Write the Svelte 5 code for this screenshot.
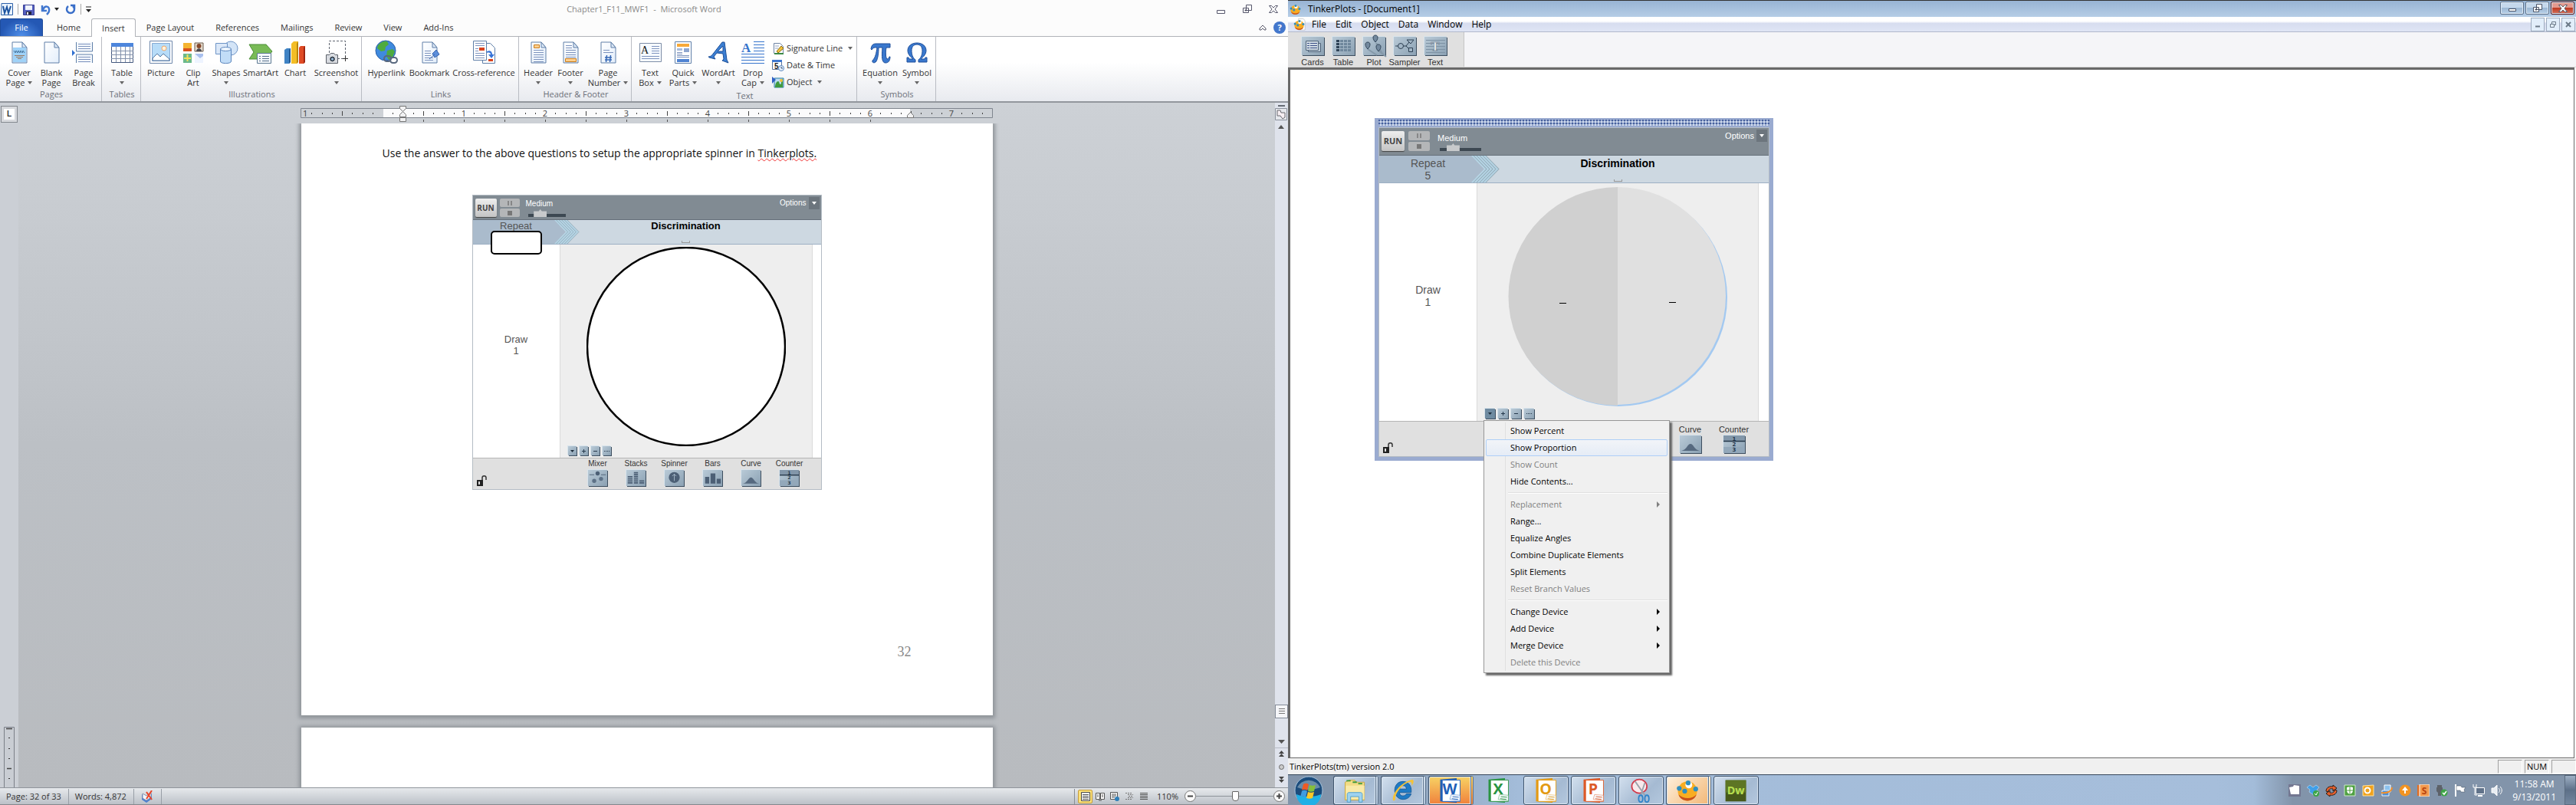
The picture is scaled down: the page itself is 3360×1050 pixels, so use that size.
<script>
  const tabs = ['Home', 'Insert', 'Page Layout', 'References', 'Mailings', 'Review', 'View', 'Add-Ins'];

  const sheet = (lines) =>
    `<path d="M7 3h13l6 7v20H7z" fill="url(#paper)" stroke="#5f7fa8"/><path d="M20 3v7h6z" fill="#dce8f6" stroke="#5f7fa8"/>${lines}`;
  const rows = (x1, x2, ys, c = '#7d93bd') =>
    ys.map((y) => `<path d="M${x1} ${y}.5H${x2}" stroke="${c}"/>`).join('');

  const art = {
    cover: sheet(
      '<path d="M8 10h17v19H8z" fill="#9fd2f8"/><path d="M9 14l2 3 1-3 2 3 1-3 2 3 1-3 2 3 1-3 2 3" fill="none" stroke="#45739c"/><path d="M10 20.500h13M12 22.500h9M14 24.500h5" stroke="#9c7b62"/>'
    ),
    blank: sheet(''),
    pbreak:
      '<path d="M6.500 3v12h21V3" fill="#f4f8fd" stroke="#5f7fa8"/><path d="M6.500 30V19h21v11" fill="#f4f8fd" stroke="#5f7fa8"/>' +
      rows(9, 25, [5, 8, 11, 22, 25, 28]) +
      '<path d="M1 13l4 4-4 4z" fill="#2f6fd0"/>',
    table:
      '<path d="M2.500 4.500h28v25h-28z" fill="#fff" stroke="#44597f"/><path d="M2 4h29v5H2z" fill="#4d86dc"/><path d="M2 14.500h29M2 19.500h29M2 24.500h29M8.500 9v20M14.500 9v20M20.500 9v20M26.500 9v20" stroke="#8291ab"/>',
    picture:
      '<path d="M1.500 1.500h29v29h-29z" fill="#fff" stroke="#6d87ab"/><path d="M4.500 4.500h23v23h-23z" fill="#b7dcf8" stroke="#86a9d2"/><circle cx="20" cy="11" r="3" fill="#fff2dc" stroke="#f0a868"/><path d="M5 24l6-6 4 4 4-4 8 7v2H5z" fill="#fff" stroke="#53779f"/>',
    clip:
      '<path d="M3 4h11v11H3z" fill="#f5b431"/><path d="M3 11h11v4H3z" fill="#d9531e"/><path d="M18 4h11v11H18z" fill="#e6ddd0" stroke="#6b5a4a"/><circle cx="23.500" cy="8" r="3" fill="#86492c"/><path d="M20 15c0-5 7-5 7 0z" fill="#4b4a52"/><path d="M3 18h11v12H3z" fill="#6bb98c"/><path d="M8.500 19v9M4 24h9" stroke="#f3e35c" stroke-width="2"/><path d="M18 18h11v12H18z" fill="#a9c0ee"/><path d="M18 18l7 6 4-3v9H18z" fill="#eef4ff"/>',
    shapes:
      '<circle cx="22" cy="11" r="9" fill="#d3e4f7" stroke="#6e94c6"/><path d="M2.500 4.500h15v14h-15z" fill="#dbe8f8" stroke="#6e94c6"/><path d="M8.500 12v16c0 3.500 14 3.500 14 0V12z" fill="#c1dcf7" stroke="#5c86bd"/><ellipse cx="15.500" cy="12" rx="7" ry="2.500" fill="#eef6ff" stroke="#5c86bd"/>',
    smartart:
      '<path d="M1 6h22l8 9-8 10H1l6-9z" fill="#79bb57" stroke="#4c8f38"/><path d="M11.500 17.500h18v13h-18z" fill="#f4f8fb" stroke="#5b7891"/><path d="M14 21.500h2M18 21.500h9M14 24.500h2M18 24.500h9M14 27.500h2M18 27.500h9" stroke="#58718c"/>',
    chart:
      '<path d="M2 13l3-2h5v18l-2 2H2z" fill="#3f83c4"/><path d="M8 13l2-2v18l-2 2z" fill="#26598f"/><path d="M11 5l3-3h6v27l-2 2h-7z" fill="#f3bd25"/><path d="M18 5l2-3v27l-2 2z" fill="#b98407"/><path d="M21 10l2-2h6v21l-2 2h-6z" fill="#df4a24"/><path d="M27 10l2-2v21l-2 2z" fill="#9d2410"/>',
    shot:
      '<path d="M6.500 17V1.500h21v20M17 24.500h8" fill="none" stroke="#5e6470" stroke-dasharray="3 2"/><path d="M24 24.500h7M27.500 21v7" stroke="#333"/><path d="M2.500 19.500h4l2-2h4l2 2h3v11h-15z" fill="#d6d9df" stroke="#5b6068"/><circle cx="10.500" cy="25" r="4" fill="#3c4754" stroke="#fff"/><circle cx="10.500" cy="25" r="1.500" fill="#9fc3e4"/>',
    link:
      '<circle cx="15" cy="14" r="13" fill="#3f8ade" stroke="#2b5fa8"/><path d="M5 7c4-5 9-6 12-5l2 4-4 3-1 5-5 1-5-4zM17 14l7-2 3 3-3 8-5 3-3-5z" fill="#4eab3f"/><path d="M13 24.500a3.500 3.500 0 0 1 3.500-3.500h2a3.500 3.500 0 0 1 0 7h-2a3.500 3.500 0 0 1-3.500-3.500zM21 26.500a3.500 3.500 0 0 1 3.500-3.500h2a3.500 3.500 0 0 1 0 7h-2a3.500 3.500 0 0 1-3.500-3.500z" fill="none" stroke="#59697f" stroke-width="2"/>',
    mark: sheet(
      rows(10, 18, [14, 17, 20]) + rows(10, 21, [23, 26]) + '<path d="M20 18l5-5 4 6-6 4zM16 25l7-6" fill="#5c8edb" stroke="#3563ae"/>'
    ),
    xref:
      '<path d="M14.500 30.500v-26h10l6 6v20z" fill="#fff" stroke="#5f7fa8"/><path d="M22 25h6v3h-6z" fill="#d9421c"/><path d="M2.500 1.500h17v25h-17z" fill="#fff" stroke="#5f7fa8"/>' +
      rows(5, 17, [4, 7, 17, 20, 23]) +
      '<path d="M10 10h7v4h-7z" fill="#d9421c"/><path d="M5 11.500h4M5 14.500h4" stroke="#7d93bd"/><path d="M20 15c5-2 7 1 7 4h3l-4 5-4-5h3c0-2-2-3-5-2z" fill="#3874d8"/>',
    header: sheet('<path d="M10.500 6.500h7v4h-7z" fill="#ffcf8d" stroke="#c97d1d"/>' + rows(10, 23, [13, 16, 19, 22, 25, 28])),
    footer: sheet(rows(10, 18, [7, 10]) + rows(10, 23, [13, 16, 19, 22]) + '<path d="M9.500 24.500h14v4h-14z" fill="#ffcf8d" stroke="#c97d1d"/>'),
    pnum: sheet(rows(10, 18, [13]) + rows(10, 23, [16]) + '<path d="M14.500 20l-1 9M19.500 20l-1 9M12 23h9M12 26h9" stroke="#3567b5" stroke-width="1.500"/>'),
    tbox:
      '<path d="M2.500 4.500h28v24h-28z" fill="#f6faff" stroke="#7d8da6"/>' + rows(18, 28, [8, 11, 14, 17]) + rows(5, 28, [21, 24]) + '<text x="4" y="18" font-size="14" font-family="Liberation Serif, serif" fill="#111">A</text>',
    parts:
      '<path d="M5.500 2.500h21v28h-21z" fill="#fff" stroke="#5f7fa8"/><path d="M8 5h16v4H8z" fill="#f7a938"/><path d="M8 11h7v3H8z" fill="#a9bcdb"/><path d="M17 11h7v5h-7z" fill="#8ea6cf"/>' + rows(8, 15, [16, 18]) + rows(8, 24, [20, 22]) + '<path d="M8 25h16v4H8z" fill="#4f83d2"/>',
    wordart:
      '<path d="M3 22c3 0 5-2 7-5L21 3h3l3 23 2 4-8-3 2-2-1-7-8-1-4 5 2 3-8-2zM15 15h7V8z" fill="#3c7fd2" stroke="#1e4f97"/>',
    drop:
      '<text x="1" y="16" font-size="17" font-weight="bold" font-family="Liberation Serif, serif" fill="#3674cc">A</text>' + rows(17, 31, [2, 6, 10, 14], '#3674cc') + rows(1, 31, [18, 22, 26, 30], '#3674cc'),
    pi: '<path d="M4 12c1-6 3-7 7-7h18v5h-5c-1 6-1 13 1 15 2 0 2-1 3-3h1c0 5-2 8-6 8-5 0-5-8-4-20h-5c0 8-1 14-3 18-2 3-6 2-5-1 4-4 5-10 6-17-4 0-5 0-7 3z" fill="#3a78cd" stroke="#1f4f9a"/>',
    omega: '<path d="M3 29v-6h2l1 2h5c-4-3-7-7-7-11C4 8 9 4 16 4s12 4 12 10c0 4-3 8-7 11h5l1-2h2v6H18v-3c4-3 5-8 5-12s-2-8-7-8-7 4-7 8 1 9 5 12v3z" fill="#3a78cd" stroke="#1f4f9a"/>'
  };

  const groups = [
    { name: 'Pages', items: [['cover', 42, 'Cover', 'Page', 1], ['blank', 42, 'Blank', 'Page'], ['pbreak', 42, 'Page', 'Break']] },
    { name: 'Tables', items: [['table', 44, 'Table', '', 1]] },
    { name: 'Illustrations', items: [['picture', 44, 'Picture', ''], ['clip', 40, 'Clip', 'Art'], ['shapes', 46, 'Shapes', '', 1], ['smartart', 44, 'SmartArt', ''], ['chart', 46, 'Chart', ''], ['shot', 61, 'Screenshot', '', 1]] },
    { name: 'Links', items: [['link', 56, 'Hyperlink', ''], ['mark', 56, 'Bookmark', ''], ['xref', 86, 'Cross-reference', '']] },
    { name: 'Header & Footer', items: [['header', 42, 'Header', '', 1], ['footer', 42, 'Footer', '', 1], ['pnum', 56, 'Page', 'Number', 1]] },
    { name: 'Text', items: [['tbox', 40, 'Text', 'Box', 1], ['parts', 46, 'Quick', 'Parts', 1], ['wordart', 46, 'WordArt', '', 1], ['drop', 44, 'Drop', 'Cap', 1]], small: true },
    { name: 'Symbols', items: [['pi', 52, 'Equation', '', 1], ['omega', 44, 'Symbol', '', 1]] }
  ];

  const smallItems = [
    { label: 'Signature Line', drop: true, art: '<path d="M2.500 1.500h8l4 4v9h-12z" fill="#fff" stroke="#6d83a4"/><path d="M4 5h5M4 8h4" stroke="#8fa2c0"/><path d="M6 12l6-7 3 3-7 6z" fill="#f2c23c" stroke="#8a6a12"/><path d="M3 14h12v2H3z" fill="#3c8a46"/>' },
    { label: 'Date & Time', drop: false, art: '<path d="M.5 1.500h12v12H.5z" fill="#fff" stroke="#5b7399"/><path d="M0 1h13v3H0z" fill="#3f78cf"/><text x="3" y="13" font-size="10" font-weight="bold" font-family="Liberation Sans, sans-serif" fill="#222">5</text><circle cx="12" cy="12" r="3.500" fill="#e9f2fc" stroke="#5c87bd"/><path d="M12 10v2h2" fill="none" stroke="#33507b"/>' },
    { label: 'Object', drop: true, art: '<path d="M3 3h12v12H3z" fill="#bcdcf2" stroke="#2a7da5"/><path d="M0 1l5 4-5 5z" fill="#2f5fc4"/><path d="M4 15c0-5 2-8 4-8s1 4 3 4 0-6 3-7v11z" fill="#3f9a3d"/><circle cx="12" cy="6" r="2" fill="#f2c23c"/>' }
  ];

  const inch = 106;
  const rulerTicks = Array.from({ length: 67 }, (_, i) => i + 1)
    .map((i) => ({ n: i - 8, x: 1 + (i * inch) / 8 }))
    .filter((t) => t.x < 900);

  const allDevices = ['Mixer', 'Stacks', 'Spinner', 'Bars', 'Curve', 'Counter'];
  const deviceArt = {
    Mixer: '<path d="M2 7h7M19 7h7" stroke="#4c5f75"/><circle cx="14" cy="5" r="3" fill="#4c5f75"/><circle cx="9" cy="16" r="3" fill="#5d7187"/><circle cx="19" cy="13" r="3" fill="#5d7187"/>',
    Stacks: '<path d="M2 10h7M2 13h7M2 16h7M2 19h7M11 4h6M11 7h6M11 10h6M11 13h6M11 16h6M11 19h6M19 16h7M19 19h7" stroke="#4c5f75" stroke-width="2"/>',
    Spinner: '<circle cx="14" cy="11" r="8" fill="#4c5f75"/><path d="M14 16V6M11 9l3-3 3 3" fill="none" stroke="#a9bccb"/>',
    Bars: '<path d="M3 10h6v10H3zM11 5h7v15h-7zM20 13h6v7h-6z" fill="#4c5f75"/>',
    Curve: '<path d="M2 20c7-1 8-9 12-9s5 8 12 9z" fill="#56697f"/>',
    Counter: '<path d="M0 0h28v7H0z" fill="#8296a9"/><path d="M0 15h28v8H0z" fill="#93a8ba"/><path d="M0 7.500h28" stroke="#26384a" stroke-width="1.500"/><g font-family="DejaVu Sans, sans-serif" font-size="7" font-weight="bold" fill="#25384c" text-anchor="middle"><text x="14" y="7">1</text><text x="14" y="14">2</text><text x="14" y="21">3</text></g>'
  };

  const menu = [
    { t: 'Show Percent' }, { t: 'Show Proportion', hot: true }, { t: 'Show Count', off: true }, { t: 'Hide Contents...' }, null,
    { t: 'Replacement', off: true, sub: true }, { t: 'Range...' }, { t: 'Equalize Angles' }, { t: 'Combine Duplicate Elements' }, { t: 'Split Elements' }, { t: 'Reset Branch Values', off: true }, null,
    { t: 'Change Device', sub: true }, { t: 'Add Device', sub: true }, { t: 'Merge Device', sub: true }, { t: 'Delete this Device', off: true }
  ];

  const tools = [
    { t: 'Cards', a: '<path d="M8.500 8.500h16v11h-16z" fill="#b9c9d6" stroke="#51647a"/><path d="M5.500 5.500h16v12h-16z" fill="#cfdae3" stroke="#51647a"/><path d="M7 8.500h3M11 8.500h9M7 11.500h3M11 11.500h9M7 14.500h3M11 14.500h9" stroke="#3c4f86"/>' },
    { t: 'Table', a: '<path d="M5 4h4v3H5zM5 8h4v3H5zM5 12h4v3H5zM5 16h4v3H5z" fill="#2f4356"/><path d="M10 4h4v3h-4zM15 4h4v3h-4zM20 4h4v3h-4zM10 8h4v3h-4zM15 8h4v3h-4zM20 8h4v3h-4zM10 12h4v3h-4zM15 12h4v3h-4zM20 12h4v3h-4zM10 16h4v3h-4zM15 16h4v3h-4zM20 16h4v3h-4z" fill="#6f879c"/>' },
    { t: 'Plot', a: '<path d="M17 8l8 14M6 16l12 8M20 18l10 8" stroke="#8498a8" stroke-width="2"/><g fill="#73899e" stroke="#32465a"><path d="M6 16c-4-4-4-9 0-9s4 5 0 9zM16 7c-4-4-4-9 0-9s4 5 0 9zM20 19c-4-4-4-9 0-9s4 5 0 9z"/></g>' },
    { t: 'Sampler', a: '<path d="M2 12h4M12 12h4l4-5M16 12l4 4" stroke="#2d4053" fill="none"/><circle cx="9" cy="12" r="3.500" fill="#a3b6c6" stroke="#2d4053"/><path d="M17 4h9l-4 5z" fill="#a3b6c6" stroke="#2d4053"/><path d="M19.500 14.500h5v5h-5z" fill="#a3b6c6" stroke="#2d4053"/>' },
    { t: 'Text', a: '<path d="M2 4.500h25M2 8.500h25M2 12.500h25M2 16.500h25M2 20.500h25" stroke="#7d92a4"/><text x="14" y="18" text-anchor="middle" font-family="Liberation Serif, serif" font-weight="bold" font-size="17" fill="#eef2f5" stroke="#5a6e80" stroke-width="0.500">T</text>' }
  ];

  const office = (c, l) =>
    `<path d="M2 3l24-2v36L2 35z" fill="${c}"/><path d="M5 4h26v31H5z" fill="#fff" stroke="${c}"/><text x="16" y="25" text-anchor="middle" font-size="22" font-weight="bold" font-family="Open Sans, sans-serif" fill="${c}">${l}</text><path d="M18 25l13 1v8l-15-2z" fill="#f6f9fd" stroke="${c}" stroke-width="0.500"/><path d="M20 28l9 1M19 31l9 1" stroke="${c}"/>`;
  const ball =
    '<circle cx="16" cy="20" r="14" fill="#f8ad22"/><path d="M3 25C6 37 26 37 29 25C24 32 9 32 3 25z" fill="#c9501c"/><circle cx="18" cy="11" r="5" fill="#fff"/><g fill="#2f8fbf"><circle cx="4" cy="16" r="3.500"/><circle cx="12" cy="20" r="3.500"/><circle cx="17" cy="8" r="3.500"/><circle cx="28" cy="17" r="3.500"/></g>';
  const apps = [
    { n: 'Explorer', k: 'win stack', a: '<path d="M2 7l6-3h8l2 3h12v26H2z" fill="#f2dc86" stroke="#c8a53b"/><path d="M4 5h6M13 7h6M21 9h6" stroke="#3f9a3d" stroke-width="2"/><path d="M3 12h27v20H3z" fill="#f9eaa9"/><path d="M5 36V25c0-2 1-3 3-3h16c2 0 3 1 3 3v11h-5v-8H10v8z" fill="#9ed2ef" stroke="#4a9ccb"/>' },
    { n: 'Internet Explorer', k: 'win stack', a: '<path d="M17 6c-8 0-12 6-12 13s5 13 12 13c6 0 10-3 12-8h-7c-1 2-3 3-5 3-3 0-5-2-5-5h17C30 12 25 6 17 6zm-5 11c1-4 3-5 5-5s5 1 5 5z" fill="#1f7ac4" stroke="#155a98"/><path d="M3 34C-1 26 14 6 31 3c3 2 1 6-1 9 0-4-1-6-4-5C15 10 4 25 6 33z" fill="#f3c23b"/>' },
    { n: 'Word', k: 'win stack alert', a: office('#1f5fb8', 'W') },
    { n: 'Excel', k: '', a: office('#2a9442', 'X') },
    { n: 'Outlook', k: 'win', a: office('#e39a13', 'O') },
    { n: 'PowerPoint', k: 'win', a: office('#dc5a28', 'P') },
    { n: 'Snipping Tool', k: 'win', a: '<ellipse cx="14" cy="13" rx="11" ry="10" fill="#f8e9ec" stroke="#d23b4c" stroke-width="2"/><path d="M8 6l14 20M22 8l-6 18" stroke="#9aa2ab" stroke-width="2"/><ellipse cx="25" cy="31" rx="3" ry="5" fill="none" stroke="#2f83c9" stroke-width="2"/><ellipse cx="16" cy="31" rx="3" ry="5" fill="none" stroke="#2f83c9" stroke-width="2"/>' },
    { n: 'TinkerPlots', k: 'win stack warm', a: ball },
    { n: 'Dreamweaver', k: 'win', a: '<path d="M1 4h30v31H1z" fill="#47591a"/><path d="M1 4h30v18H1z" fill="#66822a" opacity=".7"/><text x="16" y="25" text-anchor="middle" font-size="16" font-weight="bold" font-family="Open Sans, sans-serif" fill="#b8e051">Dw</text>' }
  ];

  const tray = [
    ['Camera', '<path d="M0 0h16v16H0z" fill="#737791"/><path d="M1 4l5-1 1-2 7 1v11H3z" fill="#fff"/>'],
    ['Dropbox', '<path d="M4 1l4 3 4-3 4 3-3 3 2 3-6 4-6-4 1-3-4-3z" fill="#3f9fe8" stroke="#dcefff" stroke-width="0.500"/><circle cx="12" cy="12" r="4" fill="#3da547"/><path d="M10 12l2 2 2-4" fill="none" stroke="#fff"/>'],
    ['Sync', '<path d="M1 9c0-5 5-7 9-6V1l5 4-5 4V6C6 5 4 7 4 10zM15 8c0 5-5 7-9 6v2l-5-4 5-4v3c4 1 6-1 6-4z" fill="#e8602c" stroke="#2d1e18"/>'],
    ['Shield', '<path d="M1 1h14v14H1z" fill="#4fa043" stroke="#cfe9c8"/><path d="M8 3l4 1v4c0 3-2 4-4 5-2-1-4-2-4-5V4z" fill="#fff"/><path d="M8 3v10M4 8h8" stroke="#4fa043"/>'],
    ['Outlook', '<path d="M1 2l14-1v14H1z" fill="#f0a21b" stroke="#ffe2a0"/><circle cx="7" cy="8" r="3.500" fill="none" stroke="#fff" stroke-width="2"/>'],
    ['Updates', '<path d="M5 1h8v9H5z" fill="#8dc3ef" stroke="#fff"/><path d="M2 8h9v7H2z" fill="#4d8fd6" stroke="#e5f2ff"/><path d="M1 11c8 1 14-2 14-7" fill="none" stroke="#f08f2a" stroke-width="2"/>'],
    ['Upload', '<circle cx="8" cy="8" r="7.500" fill="#f39422"/><path d="M8 3l4 5H9v4H7V8H4z" fill="#fff"/>'],
    ['Snagit', '<path d="M0 1h13v14H0z" fill="#e06e23"/><path d="M3 0h13v16H3z" fill="#f29a4e" stroke="#fff"/><text x="9" y="13" text-anchor="middle" font-size="12" font-weight="bold" font-family="Open Sans, sans-serif" fill="#b8430f">S</text>'],
    ['Safely remove', '<path d="M2 1v3h6V1M1 4h8v5l-2 2v4H3v-4L1 9z" fill="#5d6269"/><circle cx="11" cy="11" r="4.500" fill="#3da547"/><path d="M9 11l2 2 3-4" fill="none" stroke="#fff" stroke-width="1.500"/>'],
    ['Action center', '<path d="M2 0v16" stroke="#fff" stroke-width="2"/><path d="M3 2h6l1 2h5l-2 3 1 3H9L8 8H3z" fill="#fff" stroke="#3d4c5c" stroke-width="0.500"/>'],
    ['Network', '<path d="M4.500 4.500h11v8h-11z" fill="#61738a" stroke="#fff"/><path d="M7 15h6" stroke="#fff" stroke-width="2"/><path d="M1 0v4h4V0M3 4v10h3" fill="none" stroke="#fff"/>'],
    ['Volume', '<path d="M1 5h3l4-4v14l-4-4H1z" fill="#e8edf2" stroke="#fff"/><path d="M10 5c2 2 2 4 0 6M12 3c3 3 3 7 0 10" fill="none" stroke="#fff"/>']
  ];
</script>

{#snippet pic(markup, w, h, cls = '')}
  <svg class={cls} width={w} height={h} viewBox="0 0 {w} {h}" aria-hidden="true">{@html markup}</svg>
{/snippet}

{#snippet sampler(kind, devices)}
  <section class="sampler {kind}" aria-label="Sampler">
    <header class="s-head">
      <button class="run">RUN</button>
      <div class="ctl">
        <button aria-label="Pause"><svg width="6" height="6" viewBox="0 0 6 6"><path d="M1 0v6M5 0v6" stroke="#777" stroke-width="1.500" /></svg></button>
        <button aria-label="Stop"><svg width="6" height="6" viewBox="0 0 6 6"><path d="M0 0h6v6H0z" fill="#777" /></svg></button>
      </div>
      <label class="speed">Medium<input type="range" min="0" max="100" value="24" /></label>
      <button class="opts">Options<svg width="14" height="16" viewBox="0 0 14 16"><path d="M0 0h14v16H0z" fill="#6c757d" /><path d="M4 6h6l-3 4z" fill="#fff" /></svg></button>
    </header>
    <div class="s-band">
      <div class="rep">
        Repeat
        {#if kind === 'small'}<input class="blank" aria-label="Repeat count" />{:else}<span>5</span>{/if}
      </div>
      <div class="dtitle">
        <svg class="chev" viewBox="0 0 36 34" preserveAspectRatio="none" aria-hidden="true">
          <path d="M-9 0h9l17 17L0 34h-9z" fill="#aabbcc" />
          <path d="M0 0h19l17 17-17 17H0l17-17z" fill="#b5d5e6" />
          <path d="M3 0l17 17L3 34M7 0l17 17L7 34M11 0l17 17-17 17M15 0l17 17-17 17M19 0l17 17-17 17" fill="none" stroke="#93a9b5" />
        </svg>
        <strong>Discrimination</strong>
        <i></i>
      </div>
    </div>
    <div class="s-body">
      <div class="draw">Draw<br />1</div>
      <div class="stage">
        {#if kind === 'small'}
          <svg class="wheel" viewBox="0 0 260 260"><circle cx="130" cy="130" r="129" fill="#fff" stroke="#000" stroke-width="2.500" /></svg>
        {:else}
          <svg class="wheel" viewBox="0 0 286 286">
            <circle cx="144" cy="144" r="142" fill="#a3c9f1" />
            <path d="M143 0a142 142 0 0 0 0 285z" fill="#d0d0d0" />
            <path d="M143 0a141 142 0 0 1 0 284z" fill="#e0e0e0" />
            <path d="M67 151.500h9M210 150.500h9" stroke="#000" />
          </svg>
        {/if}
        <div class="mini">
          <button aria-label="Device menu" class="m1"><svg width="9" height="9" viewBox="0 0 9 9"><path d="M2 3h5l-2.500 3z" fill="#1c2b3a" /></svg></button>
          <button aria-label="Add"><svg width="9" height="9" viewBox="0 0 9 9"><path d="M2 4.500h5M4.500 2v5" stroke="#26394c" /></svg></button>
          <button aria-label="Remove"><svg width="9" height="9" viewBox="0 0 9 9"><path d="M2 4.500h5" stroke="#26394c" /></svg></button>
          <button aria-label="More"><svg width="9" height="9" viewBox="0 0 9 9"><path d="M1 4.500h7" stroke="#26394c" stroke-dasharray="1 1" /></svg></button>
        </div>
      </div>
    </div>
    <footer class="s-foot">
      <svg class="lock" width="14" height="14" viewBox="0 0 14 14" aria-label="Unlocked"><path d="M0 6h8v8H0z" fill="#222" /><path d="M2 8h2v4H2z" fill="#ddd" /><path d="M7 6V3c0-3 5-3 5 0v3" fill="none" stroke="#333" stroke-width="1.500" /></svg>
      <div class="devs">
        {#each devices as d}
          <button>{d}<svg class="dev" viewBox="0 0 28 23">{@html deviceArt[d]}</svg></button>
        {/each}
      </div>
    </footer>
  </section>
{/snippet}

<svg class="defs" width="0" height="0" aria-hidden="true">
  <linearGradient id="paper" x2="1" y2="1"><stop offset="0" stop-color="#fff" /><stop offset="1" stop-color="#e3eefb" /></linearGradient>
</svg>

<div class="desk">
  <main class="word">
    <div class="titlebar">
      <div class="qat">
        <svg width="16" height="16" viewBox="0 0 16 16"><path d="M1 .5h14.500v15H.5z" fill="#eaf3fc" stroke="#2b5fa8" /><path d="M3 4l2 9 3-8 2 8 3-9" fill="none" stroke="#1d539f" stroke-width="2" /></svg>
        <b class="bar"></b>
        <button aria-label="Save"><svg width="15" height="15" viewBox="0 0 15 15"><path d="M.5 1.500h14v13H.5z" fill="#5560c0" stroke="#3a3f94" /><path d="M3 2h9v6H3z" fill="#f0f4fc" /><path d="M4 10h7v4H4z" fill="#23243c" /><path d="M5 11h2v3H5z" fill="#fff" /></svg></button>
        <button aria-label="Undo"><svg width="24" height="15" viewBox="0 0 24 15"><path d="M2 2v7h6M3 8c2-6 9-6 8 1 0 2-1 3-3 5" fill="none" stroke="#4177cf" stroke-width="2.500" /><path d="M18 5h6l-3 4z" fill="#222" /></svg></button>
        <button aria-label="Repeat"><svg width="14" height="15" viewBox="0 0 14 15"><path d="M4 3a5 5 0 1 0 6 0M7 2h5v5" fill="none" stroke="#3a6fc9" stroke-width="2.500" /></svg></button>
        <b class="bar"></b>
        <button aria-label="Customize"><svg width="7" height="9" viewBox="0 0 7 9"><path d="M0 1h7" stroke="#222" /><path d="M0 4h7L3.500 8z" fill="#222" /></svg></button>
      </div>
      <h1>Chapter1_F11_MWF1&nbsp; -&nbsp; Microsoft Word</h1>
      <div class="wbtns">
        <button aria-label="Minimize"><svg width="14" height="14" viewBox="0 0 14 14"><path d="M1.500 8.500h10v4h-10z" fill="#fff" stroke="#55566b" /></svg></button>
        <button aria-label="Restore"><svg width="14" height="14" viewBox="0 0 14 14"><path d="M5.500 1.500h7v7h-7zM1.500 5.500h7v6h-7z" fill="#fff" stroke="#55566b" /><path d="M4 8h2v1H4z" stroke="#55566b" /></svg></button>
        <button aria-label="Close"><svg width="14" height="14" viewBox="0 0 14 14"><path d="M1.500 2.500h3l2.500 2.500 2.500-2.500h3L9 7l3.500 4.500h-3L7 9l-2.500 2.500h-3L5 7z" fill="#fff" stroke="#55566b" /></svg></button>
      </div>
    </div>
    <nav class="tabs">
      <button class="file">File</button>
      {#each tabs as t}<button class:on={t === 'Insert'}>{t}</button>{/each}
      <span class="tabend">
        <svg width="10" height="8" viewBox="0 0 10 8"><path d="M1 5l4-4 4 4v2H7L5 5 3 7H1z" fill="#fff" stroke="#556" /></svg>
        <button class="help" aria-label="Help">?</button>
      </span>
    </nav>
    <div class="ribbon">
      {#each groups as g}
        <section class="grp">
          <div class="gitems">
            {#each g.items as [icon, w, a, b, drop]}
              <button class="big" style:width="{w}px">
                {@render pic(art[icon], 32, 32)}
                <span>{a}</span>
                <span>{b}{#if drop}<i class:solo={!b}></i>{/if}</span>
              </button>
            {/each}
            {#if g.small}
              <div class="smalls">
                {#each smallItems as s}
                  <button>{@render pic(s.art, 16, 16)}{s.label}{#if s.drop}<i></i>{/if}</button>
                {/each}
              </div>
            {/if}
          </div>
          <h2>{g.name}</h2>
        </section>
      {/each}
    </div>
    <div class="work">
      <div class="leftcol">
        <button class="tabsel" aria-label="Tab selector">L</button>
        <svg class="vruler" width="14" height="79" viewBox="0 0 14 79" aria-hidden="true">
          <path d="M.5 79V.5h13V79" fill="#c9cdd3" stroke="#7b8088" /><path d="M3 2.500h8M4 54.500h6" stroke="#444" stroke-width="1.500" /><path d="M6 14.500h2M6 28.500h2M6 41.500h2M6 67.500h2" stroke="#333" />
        </svg>
      </div>
      <div class="center">
        <div class="hruler">
          <svg width="904" height="24" viewBox="0 0 904 24" aria-hidden="true">
            <path d="M.5 5.500h902v12H.5z" fill="#cdd1d6" stroke="#7f858e" />
            <path d="M108 6h687v11H108z" fill="#fbfbfc" />
            <text x="3" y="16" class="rn">1</text>
            {#each rulerTicks as t}
              {#if t.n % 8 === 0 && t.n !== 0}
                <text x={t.x} y="16" text-anchor="middle" class="rn">{Math.abs(t.n / 8)}</text>
              {:else if t.n % 4 === 0 && t.n !== 0}
                <path d="M{Math.round(t.x)}.5 9v6" stroke="#444" />
              {:else if t.n !== 0}
                <path d="M{Math.round(t.x)}.5 11v2" stroke="#444" />
              {/if}
              {#if t.n % 4 === 0 && t.n > 3 && t.n < 52}<path d="M{Math.round(t.x)}.5 20v3" stroke="#555" />{/if}
            {/each}
            <path d="M129.500 2.500h8v3l-4 4-4-4zM129.500 16.500v-3l4-4 4 4v3zM129.500 17.500h8v5h-8z" fill="#f1f1f2" stroke="#777" />
            <path d="M791.500 17.500v-3l4-4 4 4v3z" fill="#f1f1f2" stroke="#777" />
          </svg>
        </div>
        <div class="docs">
          <article class="page first">
            <p>Use the answer to the above questions to setup the appropriate spinner in <u>Tinkerplots.</u></p>
            {@render sampler('small', allDevices)}
            <span class="pno">32</span>
          </article>
          <article class="page next" aria-label="Page 33"></article>
        </div>
      </div>
      <div class="vscroll">
        <svg width="17" height="50" viewBox="0 0 17 50" aria-hidden="true"><path d="M4 4h9" stroke="#666b75" stroke-width="2" /><path d="M.5 7.500h15v15H.5z" fill="#e5e7ec" stroke="#8b919c" /><path d="M3 10h4l1 3h5v6l-3 2-3-4H3z" fill="#f6eef2" stroke="#68686f" /><path d="M4 34l4-5 4 5z" fill="#555" /></svg>
        <span class="thumb"></span>
        <svg width="17" height="90" viewBox="0 0 17 90" aria-hidden="true"><path d="M4 28h9l-4.500 5z" fill="#555" /><path d="M0 38.500h17" stroke="#b4b9c4" /><path d="M5 46l3.500-4 3.500 4zM5 50l3.500-4 3.500 4zM5 80l3.500 4 3.500-4zM5 76l3.500 4 3.500-4z" fill="#444" /><circle cx="8.500" cy="63.500" r="3" fill="#ccc" stroke="#666" /></svg>
      </div>
    </div>
    <footer class="wstat">
      <span class="cell">Page: 32 of 33</span>
      <span class="cell">Words: 4,872</span>
      <span class="cell"><svg width="18" height="16" viewBox="0 0 18 16"><path d="M2 5l6 3 7-4v7l-7 5-6-4z" fill="#4d7fcf" /><path d="M3 4l5 3 6-4v6l-6 4-5-3z" fill="#f2f5fb" stroke="#8b96ad" /><path d="M8 2l7 10M15 0L8 11" stroke="#e8452a" stroke-width="2" /></svg></span>
      <div class="views">
        <button class="on" aria-label="Print layout"><svg width="12" height="12" viewBox="0 0 12 12"><path d="M.5.5h11v11H.5z" fill="#fff" stroke="#444" /><path d="M2 3.500h8M2 5.500h8M2 7.500h8M2 9.500h8" stroke="#555" /></svg></button>
        <button aria-label="Full screen reading"><svg width="12" height="12" viewBox="0 0 12 12"><path d="M.5 1.500h5v8h-5zM6.500 1.500h5v8h-5z" fill="#fff" stroke="#555" /><path d="M2 4h2M2 6h2M8 4h2M8 6h2M4 11h4" stroke="#555" /></svg></button>
        <button aria-label="Web layout"><svg width="12" height="12" viewBox="0 0 12 12"><path d="M.5.5h9v9h-9z" fill="#fff" stroke="#555" /><path d="M2 3h6M2 5h6M2 7h4" stroke="#555" /><circle cx="9" cy="9" r="3" fill="#2f7fb8" /></svg></button>
        <button aria-label="Outline"><svg width="12" height="12" viewBox="0 0 12 12"><path d="M1 1.500h8M4 3.500h7M5 5.500h6M4 7.500h7M1 9.500h9" stroke="#777" stroke-dasharray="2 1" /></svg></button>
        <button aria-label="Draft"><svg width="12" height="12" viewBox="0 0 12 12"><path d="M1 1.500h10M1 3.500h10M1 5.500h10M1 7.500h10M1 9.500h10" stroke="#555" /></svg></button>
      </div>
      <button class="pct">110%</button>
      <button class="rnd" aria-label="Zoom out"><svg width="15" height="15" viewBox="0 0 15 15"><circle cx="7.500" cy="7.500" r="7" fill="#fafafa" stroke="#777" /><path d="M4 7.500h7" stroke="#444" stroke-width="2" /></svg></button>
      <input class="zoom" type="range" min="0" max="100" value="51" aria-label="Zoom" />
      <button class="rnd last" aria-label="Zoom in"><svg width="15" height="15" viewBox="0 0 15 15"><circle cx="7.500" cy="7.500" r="7" fill="#fafafa" stroke="#777" /><path d="M4 7.500h7M7.500 4v7" stroke="#444" stroke-width="2" /></svg></button>
    </footer>
  </main>

  <div class="side">
    <div class="ttitle">
      <svg width="16" height="16" viewBox="0 0 34 36">{@html ball}</svg>
      <span>TinkerPlots - [Document1]</span>
      <div class="aero">
        <button aria-label="Minimize"><svg width="12" height="12" viewBox="0 0 12 12"><path d="M1.500 6.500h9v3h-9z" fill="#fff" stroke="#4a5468" /></svg></button>
        <button aria-label="Restore"><svg width="12" height="12" viewBox="0 0 12 12"><path d="M4.500.5h7v7h-7zM.5 4.500h7v6h-7z" fill="#fff" stroke="#4a5468" /><path d="M3 7h2v1H3z" stroke="#4a5468" /></svg></button>
        <button class="close" aria-label="Close"><svg width="12" height="12" viewBox="0 0 12 12"><path d="M.5 1.500h3L6 4l2.500-2.500h3L8 6l3.500 4.500h-3L6 8l-2.500 2.500h-3L4 6z" fill="#fff" stroke="#555a68" /></svg></button>
      </div>
    </div>
    <nav class="tmenu">
      <svg width="16" height="16" viewBox="0 0 34 36"><path d="M14 1h14l5 5v28H14z" fill="#fff" stroke="#999" />{@html ball}</svg>
      {#each ['File', 'Edit', 'Object', 'Data', 'Window', 'Help'] as m}<button>{m}</button>{/each}
      <div class="mdi">
        <button aria-label="Minimize document"><svg width="8" height="8" viewBox="0 0 8 8"><path d="M1 6.500h6" stroke="#6c7a88" stroke-width="2" /></svg></button>
        <button aria-label="Restore document"><svg width="8" height="8" viewBox="0 0 8 8"><path d="M2.500 3V.5h5v4H6M.5 3.500h5v4h-5z" fill="none" stroke="#6c7a88" /></svg></button>
        <button aria-label="Close document"><svg width="8" height="8" viewBox="0 0 8 8"><path d="M1 1l6 6M7 1L1 7" stroke="#6c7a88" stroke-width="2" /></svg></button>
      </div>
    </nav>
    <div class="ttools">
      <div class="tset">
        {#each tools as t}
          <button><svg class="tile" width="29" height="24" viewBox="0 0 29 24">{@html t.a}</svg>{t.t}</button>
        {/each}
      </div>
    </div>
    <div class="canvas">
      <div class="frame">
        <div class="grip"></div>
        {@render sampler('large', allDevices.slice(4))}
        <ul class="menu">
          {#each menu as m}
            {#if m}
              <li><button class:hot={m.hot} disabled={m.off}>{m.t}{#if m.sub}<svg width="5" height="8" viewBox="0 0 5 8"><path d="M0 0l4 4-4 4z" fill="currentColor" /></svg>{/if}</button></li>
            {:else}
              <li class="sep"></li>
            {/if}
          {/each}
        </ul>
      </div>
    </div>
    <div class="tstat"><span>TinkerPlots(tm) version 2.0</span><b></b><b>NUM</b><b></b></div>
    <footer class="taskbar">
      <button class="orb" aria-label="Start"><svg width="38" height="38" viewBox="0 0 38 38">
        <circle cx="19" cy="19" r="18" fill="#1b4c7c" stroke="#a6c3db" /><path d="M3 24a16 16 0 0 0 32 0c-8 4-24 4-32 0z" fill="#1fb0e6" /><path d="M4 15a16 14 0 0 1 30 0c-10 4-20 4-30 0z" fill="#7d9cb4" opacity=".8" />
        <path d="M12 11c3-2 5-1 7 0l-2 8c-2-1-4-2-7 0z" fill="#ef5a24" /><path d="M20 12c3 1 5 1 8 0l-2 8c-3 1-5 1-8 0z" fill="#86bf3b" /><path d="M10 20c3-2 5-1 7 0l-2 8c-2-1-4-2-7 0z" fill="#3f9ce0" /><path d="M18 21c3 1 5 1 8 0l-2 8c-3 1-5 1-8 0z" fill="#fbc826" />
      </svg></button>
      {#each apps as a}
        <button class="app {a.k}" aria-label={a.n}>{@render pic(a.a, 33, 38, 'glyph')}</button>
      {/each}
      <div class="tray">
        {#each tray as [n, a]}<button aria-label={n}>{@render pic(a, 16, 16)}</button>{/each}
        <time>11:58 AM<br />9/13/2011</time>
        <button class="peek" aria-label="Show desktop"></button>
      </div>
    </footer>
  </div>
</div>

<style>
  :global(body) { margin: 0; background: #fff; }
  .desk { display: grid; grid-template-columns: minmax(0, 1fr) minmax(0, 1fr); height: 100vh; overflow: hidden; font: 11px/14px 'Open Sans', 'Noto Sans', sans-serif; color: #333; }
  .defs { position: absolute; }
  button { font: inherit; color: inherit; background: none; border: 0; padding: 0; margin: 0; white-space: nowrap; }
  svg { display: block; flex: none; }
  input { margin: 0; }

  .word, .side { display: flex; flex-direction: column; min-height: 0; }
  .titlebar { display: grid; grid-template-columns: 1fr auto 1fr; height: 24px; background: #fcfcfc; align-items: center; }
  .qat { display: flex; align-items: center; gap: 8px; padding-left: 1px; }
  .qat .bar { width: 1px; height: 14px; background: #aaa; margin: 0 -2px; }
  h1 { font: inherit; font-size: 11px; color: #8a8a8a; margin: 0; }
  .wbtns { display: flex; gap: 20px; justify-content: flex-end; padding-right: 12px; }

  .tabs { display: flex; height: 24px; box-sizing: border-box; background: #fcfcfc; border-bottom: 1px solid #b0b3b8; }
  .tabs > button { padding: 0 13px; border: 1px solid transparent; border-bottom: 0; }
  .tabs > button.file { width: 56px; margin-right: 4px; color: #fff; background: radial-gradient(ellipse at 50% 100%, #4f8ee8, #2458b4 70%); border-radius: 3px 3px 0 0; border-color: #1e4c9c; }
  .tabs > button.on { border-color: #b0b3b8; border-radius: 3px 3px 0 0; background: #fff; margin-bottom: -1px; }
  .tabend { margin-left: auto; display: flex; align-items: center; gap: 9px; padding-right: 3px; }
  .help { width: 16px; height: 16px; border-radius: 50%; background: #4377cc; color: #fff; font-weight: bold; }

  .ribbon { display: flex; height: 86px; box-sizing: border-box; background: linear-gradient(#fff 40%, #e8eaef); border-bottom: 2px solid #92969d; }
  .grp { display: flex; flex-direction: column; padding: 4px 2px 0 4px; border-right: 1px solid #b9bcc3; }
  .gitems { display: flex; flex: 1; }
  h2 { font: inherit; margin: 0; text-align: center; color: #6c7079; padding-bottom: 2px; }
  .big { display: flex; flex-direction: column; align-items: center; align-self: flex-start; line-height: 13px; }
  .big svg { margin-bottom: 4px; }
  .big span { display: flex; align-items: center; justify-content: center; min-height: 13px; }
  .ribbon i { width: 0; height: 0; border: 3px solid transparent; border-top: 4px solid #666; border-bottom: 0; margin-left: 4px; }
  .ribbon i.solo { margin-left: 0; }
  .smalls { display: flex; flex-direction: column; width: 111px; padding-left: 3px; box-sizing: border-box; }
  .smalls button { display: flex; align-items: center; gap: 3px; height: 22px; }

  .work { flex: 1; min-height: 0; display: flex; background: linear-gradient(#cdd1d6, #bcc0c5 50%, #b8bbbf); }
  .leftcol { width: 24px; background: #cbcfd5; display: flex; flex-direction: column; justify-content: space-between; align-items: center; padding-top: 4px; }
  .tabsel { width: 22px; height: 22px; box-sizing: border-box; border: 1px solid #84898f; outline: 3px solid #d8dade; outline-offset: -4px; background: #fff; font: bold 10px/12px 'Liberation Sans', sans-serif; }
  .center { flex: 1; min-width: 0; display: flex; flex-direction: column; }
  .hruler { display: flex; justify-content: center; height: 27px; padding-top: 2px; box-sizing: border-box; }
  .rn { font: 11px 'Open Sans', sans-serif; fill: #444; }
  .docs { flex: 1; min-height: 0; display: flex; flex-direction: column; align-items: center; gap: 16px; overflow: hidden; }
  .page { width: 902px; box-sizing: border-box; background: #fff; box-shadow: 0 1px 5px 3px #8f9499; display: flex; flex-direction: column; }
  .first { flex: none; min-height: 772px; padding: 28px 106px 73px; }
  .next { flex: 1; }
  .page p { margin: 0 0 43px; font: 14px/22px 'Open Sans', 'Noto Sans', sans-serif; color: #111; white-space: nowrap; }
  .page u { text-decoration: underline wavy #e33; text-decoration-thickness: 1px; }
  .page .sampler { align-self: center; }
  .pno { margin-top: auto; align-self: flex-end; font: 18px/20px 'Liberation Serif', serif; color: #888; }
  .vscroll { width: 17px; background: #dfe3ec; display: flex; flex-direction: column; }
  .thumb { margin-top: auto; height: 16px; border: 1px solid #848b98; background: repeating-linear-gradient(#777 0 1px, transparent 1px 3px) center / 8px 9px no-repeat #f4f5f8; }

  .wstat { display: flex; align-items: center; height: 23px; box-sizing: border-box; border-top: 1px solid #8f949b; border-bottom: 1px solid #85888e; background: linear-gradient(#e6e9ec, #bcc1c8); }
  .cell { display: flex; align-items: center; height: 20px; padding: 0 9px 0 8px; border-right: 1px solid #989ea6; }
  .views { margin-left: auto; display: flex; align-items: center; padding-left: 4px; border-left: 1px solid #888d94; height: 20px; }
  .views button { width: 19px; height: 18px; display: grid; place-items: center; box-sizing: border-box; }
  .views .on { border: 1px solid #c49a3c; border-radius: 2px; background: #fde27a; }
  .pct { margin: 0 8px; }
  .rnd { width: 15px; }
  .rnd.last { margin-right: 4px; }
  .zoom { appearance: none; width: 101px; height: 16px; background: linear-gradient(#8d9299, #8d9299) center / 100% 1px no-repeat; }
  .zoom::-webkit-slider-thumb { appearance: none; width: 9px; height: 13px; background: #fff; border: 1px solid #666; border-radius: 1px 1px 4px 4px; box-sizing: border-box; }

  /* Sampler device window */
  .sampler { --left: 127px; --rest: 13px; --head: 36px; --band: 36px; --body: 310px; --foot: 46px; --t: 14px; --lh: 16px; --s: 11px; --wheel: 286px; --dw: 57px; --ic: 28px; --top: 5px; width: 508px; border: 1px solid #b4bcc4; background: #fff; font: var(--t)/var(--lh) 'Liberation Sans', Arial, sans-serif; color: #555; position: relative; }
  .sampler.small { --left: 113px; --rest: 11px; --head: 32px; --band: 32px; --body: 278px; --foot: 41px; --t: 13px; --lh: 15px; --s: 10px; --wheel: 260px; --dw: 50px; --ic: 25px; --top: 3px; width: 454px; }
  .s-head { display: flex; align-items: flex-start; height: var(--head); box-sizing: border-box; padding: 4px 2px 0 3px; background: #818b93; border-bottom: 1px solid #66707a; font-size: var(--s); line-height: 12px; color: #fff; }
  .run { width: 30px; height: 26px; border-radius: 2px; background: linear-gradient(#eee, #c4c4c4); box-shadow: 0 1px 1px #444; font: bold 11px/12px 'Open Sans', sans-serif; color: #444; }
  .small .run { width: 28px; height: 24px; font-size: 10px; }
  .ctl { display: flex; flex-direction: column; gap: 2px; margin: 0 10px 0 5px; }
  .ctl button { width: 28px; height: 12px; border-radius: 2px; background: #b4b6b8; display: grid; place-items: center; }
  .small .ctl { margin: 0 8px 0 4px; }
  .small .ctl button { width: 26px; height: 11px; }
  .speed { display: flex; flex-direction: column; padding-top: 3px; }
  .small .speed { padding-top: 1px; }
  .speed input { appearance: none; width: 54px; height: 12px; margin: 0 0 0 3px; background: linear-gradient(#3d4852, #3d4852) center 7px / 100% 4px no-repeat; }
  .small .speed input { width: 49px; }
  .speed input::-webkit-slider-thumb { appearance: none; width: 17px; height: 10px; background: #c8cacc; clip-path: polygon(0 25%, 38% 25%, 50% 0, 62% 25%, 100% 25%, 100% 100%, 0 100%); }
  .opts { margin-left: auto; display: flex; align-items: center; gap: 3px; margin-top: -2px; }
  .s-band { display: grid; grid-template: 100% / var(--left) 1fr; height: var(--band); box-sizing: border-box; background: #cdd8e1; border-bottom: 1px solid #9db0c4; }
  .rep { background: #aabbcc; text-align: center; display: flex; flex-direction: column; align-items: center; padding-top: 2px; min-height: 0; box-sizing: border-box; }
  .small .rep { padding-top: 0; padding-right: 0; }
  .blank { width: 67px; height: 31px; flex: none; box-sizing: border-box; border: 2px solid #000; border-radius: 5px; background: #fff; position: relative; z-index: 1; }
  .small .blank { margin-top: -1px; }
  .dtitle { position: relative; display: flex; flex-direction: column; align-items: center; justify-content: space-between; padding: 2px var(--rest) 1px 0; color: #000; }
  .small .dtitle { padding-top: 0; }
  .dtitle i { width: 9px; height: 2px; border: 1px solid #999; border-top: 0; }
  .chev { position: absolute; left: -7px; top: 0; width: 36px; height: 100%; overflow: visible; }
  .small .chev { width: 32px; }
  .s-body { display: grid; grid-template-columns: var(--left) 1fr; padding-right: var(--rest); height: var(--body); }
  .draw { display: grid; place-content: center; text-align: center; padding-bottom: 16px; }
  .stage { background: #eee; border: solid #dadada; border-width: 0 1px; display: flex; flex-direction: column; align-items: center; padding-top: var(--top); position: relative; }
  .wheel { width: var(--wheel); height: var(--wheel); }
  .mini { position: absolute; left: 10px; bottom: 3px; display: flex; gap: 4px; }
  .mini button, .dev, .tile { background: linear-gradient(135deg, #b9cad7, #8ba1b3); box-shadow: 1px 1px 0 #3d4e5f, -1px -1px 0 #d9e4ec; }
  .mini button { width: 13px; height: 13px; display: grid; place-items: center; }
  .small .mini button { width: 11px; height: 12px; }
  .large .mini .m1 { background: #6f8ba1; }
  .s-foot { display: flex; justify-content: space-between; align-items: flex-end; height: var(--foot); box-sizing: border-box; background: #e0e0e0; border-top: 1px solid #b5b5b5; padding: 0 17px 4px 5px; }
  .small .s-foot { padding-right: 16px; }
  .devs { display: flex; font-size: var(--s); line-height: 14px; color: #333; }
  .devs button { width: var(--dw); display: flex; flex-direction: column; align-items: center; gap: 1px; }
  .dev { width: var(--ic); height: auto; overflow: visible; }

  /* TinkerPlots window */
  .ttitle { display: flex; align-items: center; height: 22px; box-sizing: border-box; border-top: 1px solid #333; padding: 0 2px; gap: 8px; background: linear-gradient(#98b4d4, #b5cde6); color: #000; font-size: 12px; }
  .aero { margin-left: auto; display: flex; gap: 2px; align-self: flex-start; padding-top: 1px; }
  .aero button { width: 31px; height: 17px; box-sizing: border-box; border: 1px solid #5f738c; border-radius: 2px; background: linear-gradient(#c5d8ec 45%, #9db8d4 50%, #b8d0e8); display: grid; place-items: center; box-shadow: inset 0 0 0 1px #dce8f4; }
  .aero .close { border-color: #5a1a1c; background: linear-gradient(#e39a8e 45%, #bf3c24 50%, #d2705a); }
  .tmenu { display: flex; align-items: center; height: 20px; box-sizing: border-box; border-bottom: 1px solid #b2b9cc; background: linear-gradient(#fff 30%, #d7ddef 45%, #dfe5f5); color: #000; padding: 0 1px 0 7px; gap: 12px; font-size: 12px; }
  .tmenu > svg { margin-right: -4px; }
  .mdi { margin-left: auto; display: flex; gap: 2px; }
  .mdi button { width: 18px; height: 18px; box-sizing: border-box; border: 1px solid #9fadbf; background: #e2eefa; display: grid; place-items: center; }
  .ttools { height: 46px; background: #f5f5f8; display: flex; border-bottom: 1px solid #d4d4d4; box-sizing: border-box; }
  .tset { display: flex; background: #e0e0e0; border-right: 1px solid #c5c5c5; padding: 6px 17px 0 12px; font: 11px/14px 'Liberation Sans', Arial, sans-serif; }
  .tset button { display: flex; flex-direction: column; align-items: center; width: 40px; gap: 2px; }
  .tile { overflow: visible; }
  .canvas { flex: 1; min-height: 0; position: relative; background: #fff; border: 3px solid #696969; border-width: 3px 1px 1px 3px; margin-right: 2px; }
  .frame { position: absolute; left: 110px; top: 63px; padding: 2px 5px 5px; background: #9aabd0; }
  .grip { height: 8px; margin-bottom: 2px; background: radial-gradient(circle at 1px 1px, #46609c 1px, transparent 1px) 0 0 / 4px 4px, radial-gradient(circle at 3px 3px, #d4deef 1px, transparent 1px) 0 0 / 4px 4px; }
  .menu { position: absolute; left: 142px; top: 394px; width: 243px; box-sizing: border-box; margin: 0; padding: 2px; list-style: none; border: 1px solid #979797; background: linear-gradient(#e0e0e0, #e0e0e0) 27px 2px / 1px calc(100% - 4px) no-repeat #f0f0f0; box-shadow: 3px 3px 2px #666; color: #000; z-index: 2; }
  .menu button { width: 100%; height: 22px; display: flex; align-items: center; justify-content: space-between; padding: 0 8px 0 31px; border: 1px solid transparent; border-radius: 2px; }
  .menu button:disabled { color: #808080; }
  .menu .hot { border-color: #aecff7; background: linear-gradient(#f2f4f8, #e5ecf6); }
  .sep { height: 0; margin: 3px 0 3px 29px; border-top: 1px solid #e0e0e0; border-bottom: 1px solid #fff; }
  .tstat { height: 21px; display: flex; align-items: center; background: #f0f0f0; color: #000; padding: 0 0 0 2px; gap: 3px; }
  .tstat span { flex: 1; }
  .tstat b { width: 30px; height: 16px; font-weight: normal; line-height: 16px; text-align: center; border: 1px solid #a0a0a0; border-right-color: #fff; border-bottom-color: #fff; }

  .taskbar { display: flex; align-items: center; height: 40px; box-sizing: border-box; border-top: 1px solid #35465a; background: linear-gradient(90deg, #8294aa 0, #8294aa 60px, #a3bcd9 300px, #a6bedb 72%, #a3bcd9 75%, #8294aa 78%); padding-left: 8px; }
  .orb { width: 38px; margin-right: 13px; }
  .app { width: 59px; height: 38px; margin-right: 3px; display: grid; place-items: center; box-sizing: border-box; border-radius: 3px; border: 1px solid transparent; }
  .glyph { height: 34px; }
  .win { border-color: #41566e; background: linear-gradient(135deg, #d3e0ee, #a5bad2 60%, #b4c8de); box-shadow: inset 0 0 0 1px #dbe6f2; }
  .stack { border-right: 4px double #5f758e; }
  .alert { background: linear-gradient(#f7d264, #f0813c); }
  .warm { background: linear-gradient(135deg, #fdf0dc, #f3b878); }
  .tray { margin-left: auto; display: flex; align-items: center; gap: 8px; align-self: stretch; }
  .tray time { color: #fff; text-align: center; line-height: 17px; padding: 0 3px 0 4px; font-size: 12px; }
  .peek { width: 15px; align-self: stretch; border: 1px solid #5b6c80; background: linear-gradient(#9dafc4, #5d7088 50%, #73879f); }
</style>
